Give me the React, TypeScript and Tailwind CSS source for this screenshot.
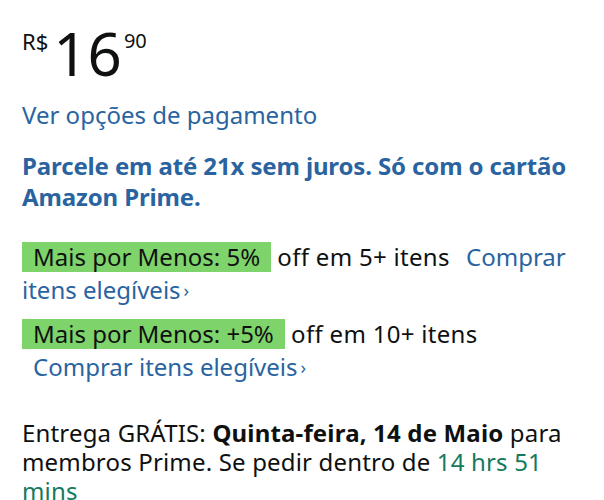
const font = { fontFamily: '"Noto Sans", "Open Sans", sans-serif' };

const Chevron = () => <span className="ml-[3px] text-[18px] align-[2px]">›</span>;

const DealRow = ({
  label,
  text,
  breakLink,
}: {
  label: string;
  text: string;
  breakLink?: boolean;
}) => (
  <p className="text-[24px] leading-[33px] text-[#0f1111]">
    <span className="inline-block h-[30px] bg-[#7ed36a] px-[11px] leading-[30px]">{label}</span>{" "}
    <span className="tracking-[0.3px]">{text}</span>
    {breakLink ? <br /> : " "}
    <span className={`text-[#2a64a0] ${breakLink ? "ml-[11px]" : "ml-[10px]"}`}>
      Comprar itens elegíveis
      <Chevron />
    </span>
  </p>
);

export default function App() {
  return (
    <div className="h-[500px] w-[604px] overflow-hidden bg-white px-[22px] pt-[24px]" style={font}>
      <div className="flex items-start text-[#0f1111]">
        <span className="mt-[6px] text-[22px] leading-none">R$</span>
        <span className="ml-[5px] text-[60px] leading-[58px]">16</span>
        <span className="ml-[2px] mt-[7px] text-[20px] leading-none">90</span>
      </div>

      <p className="mt-[18px] text-[24px] leading-[30px] text-[#2a64a0]">Ver opções de pagamento</p>

      <p className="mt-[20px] text-[24px] font-bold leading-[31px] tracking-[-0.13px] text-[#2a64a0]">
        Parcele em até 21x sem juros. Só com o cartão Amazon Prime.
      </p>

      <div className="mt-[28px] flex flex-col gap-[10px]">
        <DealRow label="Mais por Menos: 5%" text="off em 5+ itens" />
        <DealRow label="Mais por Menos: +5%" text="off em 10+ itens" breakLink />
      </div>

      <p className="mt-[34px] text-[24px] leading-[29px] tracking-[0.17px] text-[#0f1111]">
        Entrega GRÁTIS: <span className="font-bold">Quinta-feira, 14 de Maio</span> para membros Prime. Se
        pedir dentro de <span className="text-[#137b5c]">14 hrs 51 mins</span>
      </p>
    </div>
  );
}
